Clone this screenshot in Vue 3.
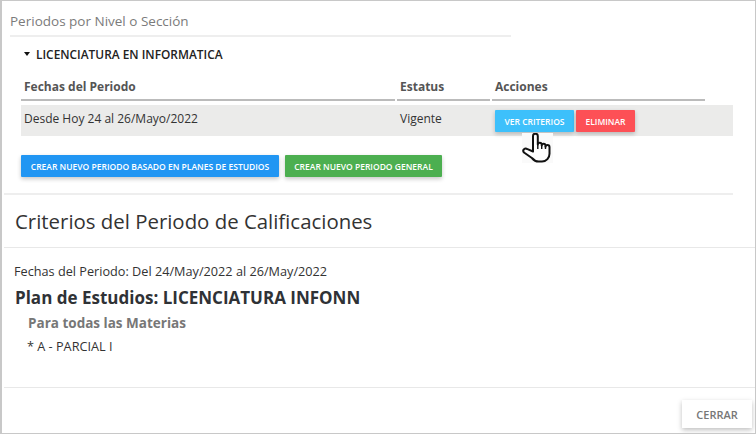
<script setup>
const rows = [{ fechas: 'Desde Hoy 24 al 26/Mayo/2022', estatus: 'Vigente' }]
</script>

<template>
  <div class="page">
    <section class="top">
      <h2 class="section-title">Periodos por Nivel o Sección</h2>
      <div class="group">
        <div class="group-head"><span class="caret"></span>LICENCIATURA EN INFORMATICA</div>
        <div class="grid head">
          <div>Fechas del Periodo</div>
          <div>Estatus</div>
          <div>Acciones</div>
        </div>
        <div v-for="r in rows" :key="r.fechas" class="grid row">
          <div class="cell">{{ r.fechas }}</div>
          <div class="cell">{{ r.estatus }}</div>
          <div class="cell actions">
            <button class="btn cyan">VER CRITERIOS</button>
            <button class="btn red">ELIMINAR</button>
          </div>
          <div class="cursor">
            <svg width="31" height="30" viewBox="0 0 31 30">
              <path d="M11 18.500V3c0-1.500 1-2.300 2.300-2.300S15.800 1.500 15.800 3v8.500c0-1.200.9-1.800 1.900-1.800s2 .7 2 1.900v.9c0-1.100.9-1.700 1.900-1.700s1.900.7 1.900 1.900v1c0-1.100.9-1.700 1.900-1.700 1.200 0 2.100.8 2.100 2.200v6.500c0 4-3 7.800-7.500 7.800h-3.300c-3 0-5-1.300-6.800-3.500L2 19.500c-1-1.200-.9-2.500 0-3.300 1-.9 2.400-.8 3.500 0L11 18.500Z" fill="#fff" stroke="#111" stroke-width="2" stroke-linejoin="round"/>
              <path d="M15.800 11.500v4.500M19.700 12v4M23.500 13v3" fill="none" stroke="#111" stroke-width="1.400"/>
            </svg>
          </div>
        </div>
        <div class="create">
          <button class="btn blue">CREAR NUEVO PERIODO BASADO EN PLANES DE ESTUDIOS</button>
          <button class="btn green">CREAR NUEVO PERIODO GENERAL</button>
        </div>
      </div>
      <hr class="rule short" />
    </section>

    <header class="modal-head">Criterios del Periodo de Calificaciones</header>

    <section class="body">
      <p class="dates">Fechas del Periodo: Del 24/May/2022 al 26/May/2022</p>
      <h3 class="plan">Plan de Estudios: LICENCIATURA INFONN</h3>
      <h4 class="sub">Para todas las Materias</h4>
      <p class="item">* A - PARCIAL I</p>
    </section>

    <footer class="foot">
      <button class="close">CERRAR</button>
    </footer>
  </div>
</template>

<style>
html, body { margin: 0; background: #fff; }
</style>

<style scoped>
.page {
  width: 756px;
  height: 434px;
  box-sizing: border-box;
  border: 1px solid #c8c8c8;
  border-left-width: 2px;
  background: #fff;
  font-family: "Open Sans", sans-serif;
  color: #333;
  overflow: hidden;
  display: flex;
  flex-direction: column;
}
.top { padding: 0 0 0 2px; }
.section-title {
  margin: 0 0 0 6px;
  width: 501px;
  height: 36px;
  box-sizing: border-box;
  padding-top: 10px;
  font-size: 13.5px;
  line-height: 20px;
  font-weight: 400;
  color: #7b7b7b;
  border-bottom: 2px solid #eee;
}
.group { padding-left: 17px; width: 712px; }
.group-head {
  height: 34px;
  padding-left: 3px;
  box-sizing: border-box;
  font-size: 11.9px;
  font-weight: 600;
  color: #222;
  display: flex;
  align-items: center;
}
.caret {
  width: 0;
  height: 0;
  border-left: 3.5px solid transparent;
  border-right: 3.5px solid transparent;
  border-top: 4px solid #111;
  margin-right: 6px;
}
.grid {
  display: grid;
  grid-template-columns: 376px 95px 241px;
}
.head {
  height: 30px;
  font-size: 12px;
  font-weight: 700;
  color: #555;
  line-height: 24px;
}
.head > div {
  box-sizing: border-box;
  padding: 4px 0 0 3px;
  margin-right: 2px;
  border-bottom: 2px solid #bbb;
}
.head > div:last-child { margin-right: 28px; }
.row {
  position: relative;
  margin-top: 4px;
  height: 31px;
  background: #ebebea;
  font-size: 12px;
  color: #333;
}
.cell { padding-left: 3px; line-height: 27px; }
.actions { display: flex; gap: 2px; padding: 5px 0 0 3px; align-items: flex-start; }
.btn {
  border: 0;
  border-radius: 1px;
  color: #fff;
  font-family: "Open Sans", sans-serif;
  font-weight: 600;
  font-size: 8.5px;
  padding: 0;
  height: 22px;
  box-shadow: 0 2px 4px rgba(0, 0, 0, 0.22);
}
.cyan { background: #3dc0fb; width: 79px; }
.red { background: #fd5056; width: 59px; }
.blue { background: #2196f3; width: 258px; }
.green { background: #4caf50; width: 157px; }
.create { display: flex; gap: 6px; margin-top: 19px; }
.cursor {
  position: absolute;
  left: 501px;
  top: 28px;
  width: 31px;
  height: 30px;
  background: #fafafa;
}
.cursor svg { display: block; }
.rule { border: 0; margin: 0; height: 2px; background: #eee; }
.short { width: 729px; margin-top: 16px; }
.modal-head {
  height: 53px;
  box-sizing: border-box;
  margin-left: 2px;
  padding: 12px 0 0 11px;
  font-size: 20.4px;
  line-height: 28px;
  color: #333;
  border-bottom: 1px solid #e8e8e8;
}
.body { padding: 14px 0 0 13px; flex: 1; }
.dates { margin: 0 0 0 -1px; font-size: 12.7px; line-height: 18px; color: #333; }
.plan { margin: 8px 0 0; font-size: 17px; line-height: 20px; font-weight: 700; color: #2f3236; }
.sub { margin: 5px 0 0 13px; font-size: 13.5px; line-height: 20px; font-weight: 700; color: #777; }
.item { margin: 4px 0 0 12px; font-size: 12.7px; line-height: 18px; color: #333; }
.foot {
  margin-left: 2px;
  height: 46px;
  border-top: 1px solid #e8e8e8;
  display: flex;
  justify-content: flex-end;
  padding: 12px 3px 0 0;
  box-sizing: border-box;
}
.close {
  width: 70px;
  height: 28px;
  border: 0;
  background: #fff;
  color: #777;
  font-family: "Open Sans", sans-serif;
  font-size: 11px;
  font-weight: 600;
  box-shadow: 0 2px 5px rgba(0, 0, 0, 0.25);
}
</style>
